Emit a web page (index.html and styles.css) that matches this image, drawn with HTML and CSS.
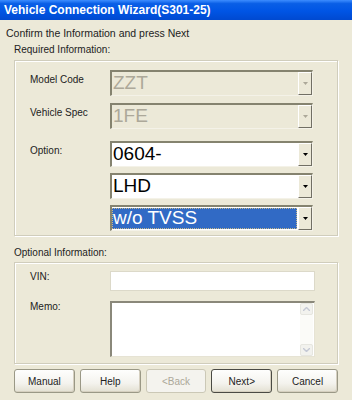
FILE: index.html
```html
<!DOCTYPE html>
<html lang="en">
<head>
    <meta charset="UTF-8">
    <title>Vehicle Connection Wizard</title>
    <link rel="stylesheet" href="styles.css">
</head>
<body>
    <div class="titlebar">Vehicle Connection Wizard(S301-25)</div>

    <div class="dialog">
        <p class="intro">Confirm the Information and press Next</p>

        <div class="group-title">Required Information:</div>
        <div class="group group-required">
            <div class="row">
                <span class="label">Model Code</span>
                <div class="combo disabled">
                    <span class="value">ZZT</span>
                    <span class="drop"><svg width="5" height="3" viewBox="0 0 5 3"><path d="M0 0h5L2.5 3z"/></svg></span>
                </div>
            </div>
            <div class="row row-spec">
                <span class="label">Vehicle Spec</span>
                <div class="combo disabled">
                    <span class="value">1FE</span>
                    <span class="drop"><svg width="5" height="3" viewBox="0 0 5 3"><path d="M0 0h5L2.5 3z"/></svg></span>
                </div>
            </div>
            <div class="row row-option">
                <span class="label">Option:</span>
                <div class="combo-stack">
                    <div class="combo">
                        <span class="value">0604-</span>
                        <span class="drop"><svg width="5" height="3" viewBox="0 0 5 3"><path d="M0 0h5L2.5 3z"/></svg></span>
                    </div>
                    <div class="combo">
                        <span class="value">LHD</span>
                        <span class="drop"><svg width="5" height="3" viewBox="0 0 5 3"><path d="M0 0h5L2.5 3z"/></svg></span>
                    </div>
                    <div class="combo selected">
                        <span class="value">w/o TVSS</span>
                        <span class="drop"><svg width="5" height="3" viewBox="0 0 5 3"><path d="M0 0h5L2.5 3z"/></svg></span>
                    </div>
                </div>
            </div>
        </div>

        <div class="group-title group-title-optional">Optional Information:</div>
        <div class="group group-optional">
            <div class="row row-vin">
                <span class="label">VIN:</span>
                <div class="textbox"></div>
            </div>
            <div class="row row-memo">
                <span class="label">Memo:</span>
                <div class="memo">
                    <div class="scrollbar">
                        <span class="scroll-btn"><svg width="7" height="4" viewBox="0 0 7 4"><path d="M0 4L3.5 0.5L7 4" fill="none" stroke="#c4c8d4" stroke-width="1.4"/></svg></span>
                        <span class="scroll-btn"><svg width="7" height="4" viewBox="0 0 7 4"><path d="M0 0L3.5 3.5L7 0" fill="none" stroke="#c4c8d4" stroke-width="1.4"/></svg></span>
                    </div>
                </div>
            </div>
        </div>

        <div class="buttons">
            <button class="btn">Manual</button>
            <button class="btn">Help</button>
            <button class="btn" disabled>&lt;Back</button>
            <button class="btn btn-default">Next&gt;</button>
            <button class="btn">Cancel</button>
        </div>
    </div>
</body>
</html>
```

FILE: styles.css
```css
* {
    margin: 0;
    padding: 0;
    box-sizing: border-box;
}

body {
    width: 352px;
    height: 400px;
    overflow: hidden;
    background: #ece9d8;
    font-family: 'Liberation Sans', Arial, sans-serif;
    font-size: 10px;
    color: #222;
}

.titlebar {
    height: 20px;
    padding-left: 4px;
    line-height: 20px;
    color: #fff;
    font-weight: bold;
    font-size: 12px;
    background: linear-gradient(#3d8dff 0%, #0a5fe6 18%, #0055e5 55%, #0049d0 100%);
}

.dialog {
    padding: 0 14px 0 14px;
}

.intro {
    margin: 6px 0 0 -8px;
    line-height: 14px;
    font-size: 10.5px;
}

.group-title {
    margin-top: 3px;
    line-height: 14px;
}

.group-title-optional {
    margin-top: 10px;
}

.group {
    margin-top: 3px;
    border: 1px solid #d0cdbc;
    box-shadow: inset 1px 1px #fff, 1px 1px #fff;
    padding-left: 15px;
}

.group-required {
    padding-top: 9px;
    padding-bottom: 4px;
}

.group-optional {
    margin-top: 2px;
    padding-top: 8px;
    padding-bottom: 6px;
}

.row {
    display: flex;
    align-items: flex-start;
}

.row .label {
    margin-top: 4px;
    line-height: 12px;
}

.row-spec {
    margin-top: 7px;
}

.row-option {
    margin-top: 12px;
}

.row-vin .label,
.row-memo .label {
    margin-top: 0;
}

.label {
    width: 80px;
    flex-shrink: 0;
}

.combo-stack {
    display: flex;
    flex-direction: column;
    gap: 6px;
}

.combo {
    width: 203px;
    height: 26px;
    display: flex;
    align-items: stretch;
    background: #fff;
    border-top: 2px solid #85836f;
    border-left: 2px solid #85836f;
    border-right: 1px solid #f4f2e8;
    border-bottom: 1px solid #f4f2e8;
    font-size: 19px;
    color: #000;
}

.combo .value {
    flex: 1;
    padding-left: 1px;
    line-height: 22px;
}

.combo.disabled {
    background: #ece9d8;
    color: #aca899;
}

.combo.selected .value {
    margin: 1px 1px 1px 0;
    background: #316ac5;
    color: #fff;
    outline: 1px dotted #c6b88a;
    outline-offset: -1px;
    line-height: 20px;
}

.drop {
    width: 14px;
    display: flex;
    align-items: center;
    justify-content: center;
    background: #ece9d8;
    border-top: 1px solid #fff;
    border-left: 1px solid #fff;
    border-right: 1px solid #716f64;
    border-bottom: 1px solid #716f64;
    fill: #000;
}

.combo.disabled .drop {
    fill: #aca899;
}

.textbox {
    width: 205px;
    height: 20px;
    background: #fff;
    border: 1px solid #dcd9c9;
}

.row-memo {
    margin-top: 10px;
}

.memo {
    width: 205px;
    height: 56px;
    background: #fff;
    border-top: 2px solid #8a887a;
    border-left: 2px solid #8a887a;
    border-right: 1px solid #e6e3d4;
    border-bottom: 1px solid #e6e3d4;
    display: flex;
    justify-content: flex-end;
}

.scrollbar {
    width: 13px;
    margin-right: 1px;
    display: flex;
    flex-direction: column;
    justify-content: space-between;
    background: #fbfbf8;
}

.scroll-btn {
    height: 12px;
    display: flex;
    align-items: center;
    justify-content: center;
    background: #f2f2ee;
    border: 1px solid #e6e6e0;
    border-radius: 2px;
}

.buttons {
    margin-top: 5px;
    display: flex;
    gap: 5px;
}

.btn {
    width: 62px;
    height: 24px;
    font-family: 'Liberation Sans', Arial, sans-serif;
    font-size: 10px;
    color: #222;
    border: 1px solid #9a9886;
    border-radius: 3px;
    background: linear-gradient(#fefefd 0%, #f4f3ee 60%, #e3e0d2 100%);
    box-shadow: inset -1px -1px #d6d0c0;
}

.btn:disabled {
    color: #aca899;
    border-color: #cbc8b6;
    background: #f4f3ee;
    box-shadow: none;
}

.btn-default {
    border-color: #4a4a44;
}
```
